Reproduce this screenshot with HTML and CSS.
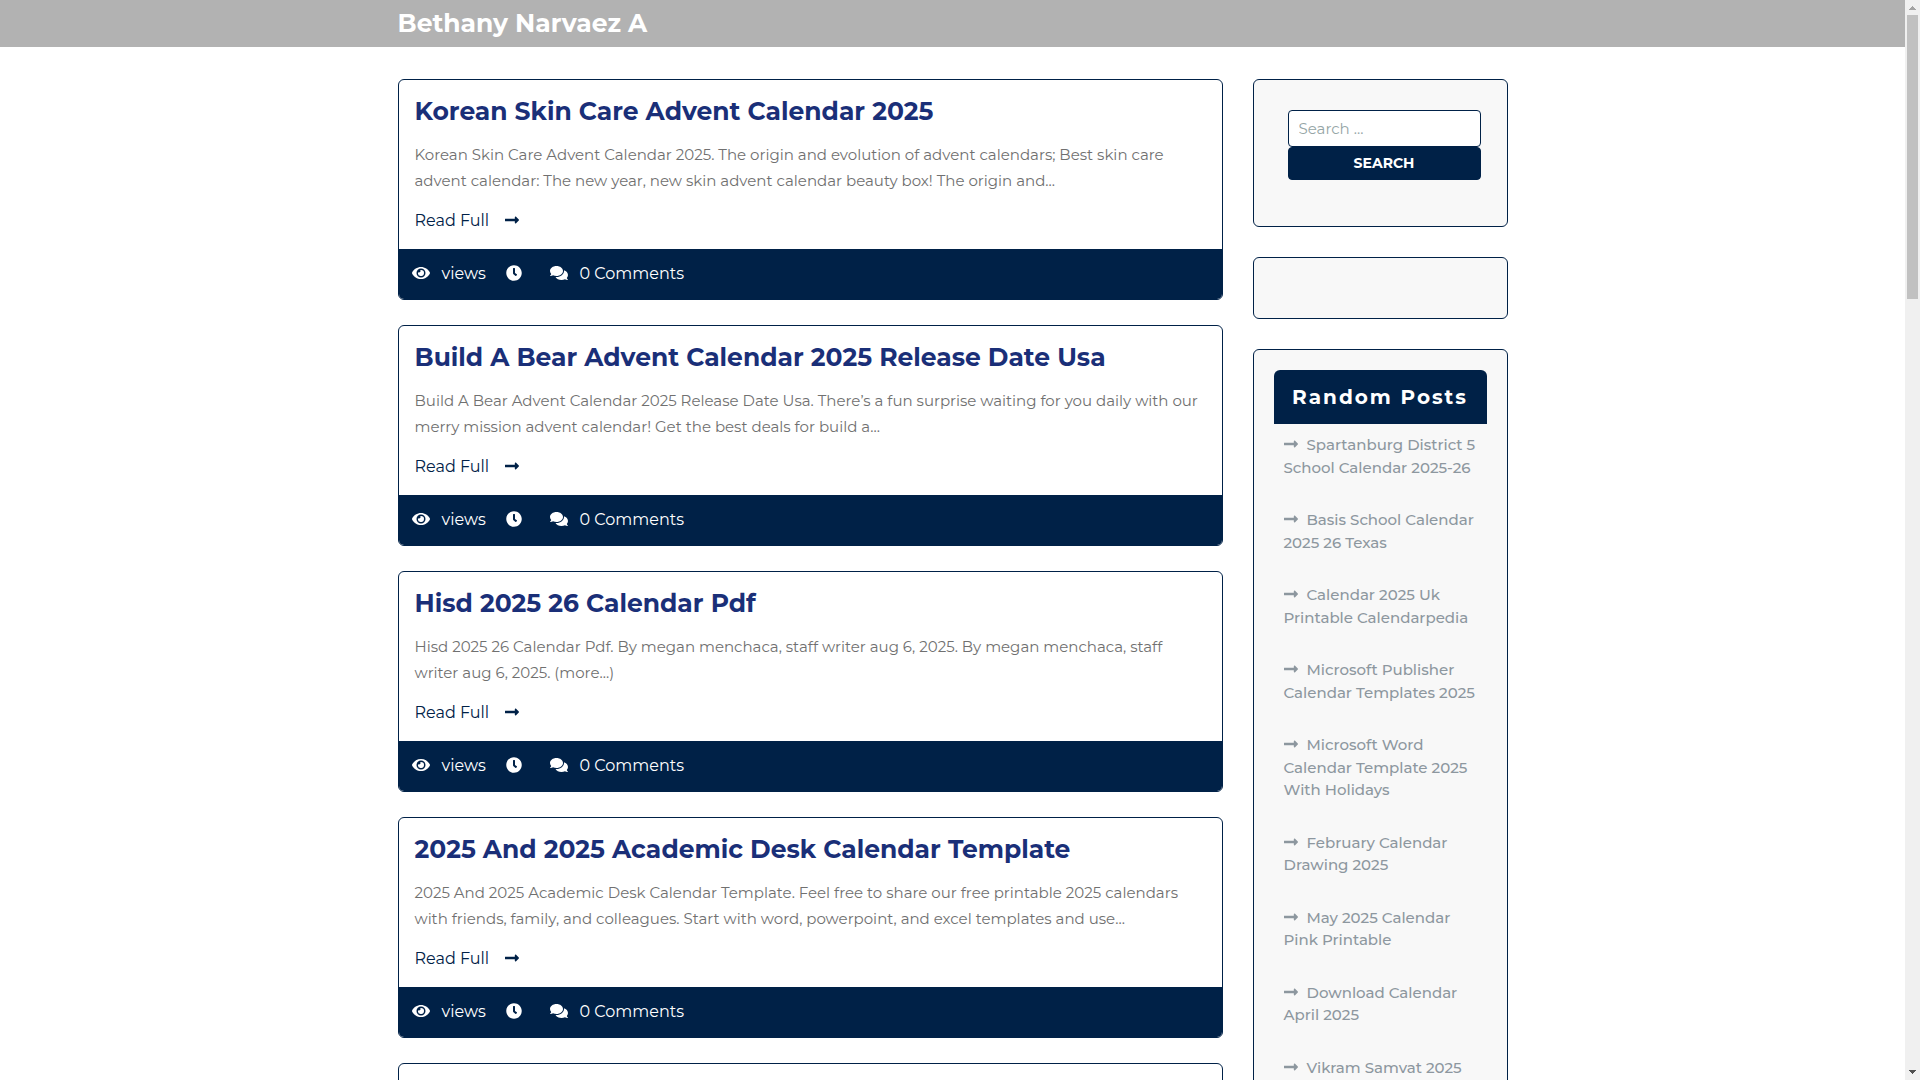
FILE: index.html
```html
<!doctype html>
<html lang="en">
<head>
<meta charset="utf-8">
<title>Bethany Narvaez A</title>
<link rel="stylesheet" href="styles.css">
</head>

<body>
<svg class="sprite" aria-hidden="true">
	<symbol id="arrow" viewBox="0 0 448 512"><path d="M313.941 216H12c-6.627 0-12 5.373-12 12v56c0 6.627 5.373 12 12 12h301.941v46.059c0 21.382 25.851 32.09 40.971 16.971l86.059-86.059c9.373-9.373 9.373-24.569 0-33.941l-86.059-86.059c-15.119-15.119-40.971-4.411-40.971 16.971V216z"/></symbol>
	<symbol id="eye" viewBox="0 0 576 512"><path d="M572.52 241.4C518.29 135.59 410.93 64 288 64S57.68 135.64 3.48 241.41a32.35 32.35 0 0 0 0 29.19C57.71 376.41 165.07 448 288 448s230.32-71.64 284.52-177.41a32.35 32.35 0 0 0 0-29.19zM288 400a144 144 0 1 1 144-144 143.93 143.93 0 0 1-144 144zm0-240a95.31 95.31 0 0 0-25.31 3.79 47.85 47.85 0 0 1-66.9 66.9A95.78 95.78 0 1 0 288 160z"/></symbol>
	<symbol id="clock" viewBox="0 0 512 512"><path d="M256,8C119,8,8,119,8,256S119,504,256,504,504,393,504,256,393,8,256,8Zm92.49,313h0l-20,25a16,16,0,0,1-22.49,2.5h0l-67-49.72a40,40,0,0,1-15-31.23V112a16,16,0,0,1,16-16h32a16,16,0,0,1,16,16V256l58,42.5A16,16,0,0,1,348.49,321Z"/></symbol>
	<symbol id="comments" viewBox="0 0 576 512"><path d="M416 192c0-88.4-93.1-160-208-160S0 103.6 0 192c0 34.3 14.1 65.9 38 92-13.4 30.2-35.5 54.2-35.8 54.5-2.2 2.3-2.8 5.7-1.5 8.7S4.8 352 8 352c36.6 0 66.9-12.3 88.7-25 32.2 15.7 70.3 25 111.3 25 114.9 0 208-71.6 208-160zm122 220c23.9-26 38-57.7 38-92 0-66.9-53.5-124.2-129.3-148.1.9 6.6 1.3 13.3 1.3 20.1 0 105.9-107.7 192-240 192-10.8 0-21.3-.8-31.7-1.9C207.8 439.6 281.8 480 368 480c41 0 79.1-9.2 111.3-25 21.8 12.7 52.1 25 88.7 25 3.2 0 6.1-1.9 7.3-4.8 1.3-2.9.7-6.3-1.5-8.7-.3-.3-22.4-24.2-35.8-54.5z"/></symbol>
</svg>

<div class="page">
	<header class="header">
		<div class="container">
			<a class="logo" href="#">Bethany Narvaez A</a>
		</div>
	</header>

	<div class="container content">
		<main class="posts">
			<article class="post">
				<div class="post-body">
					<h2><a href="#">Korean Skin Care Advent Calendar 2025</a></h2>
					<p>Korean Skin Care Advent Calendar 2025. The origin and evolution of advent calendars; Best skin care advent calendar: The new year, new skin advent calendar beauty box! The origin and…</p>
					<a class="read" href="#">Read Full <svg class="arrow"><use href="#arrow"/></svg></a>
				</div>
				<div class="meta">
					<span class="views"><svg class="wide"><use href="#eye"/></svg>views</span>
					<span class="time"><svg><use href="#clock"/></svg></span>
					<span><svg class="wide"><use href="#comments"/></svg>0 Comments</span>
				</div>
			</article>
			<article class="post">
				<div class="post-body">
					<h2><a href="#">Build A Bear Advent Calendar 2025 Release Date Usa</a></h2>
					<p>Build A Bear Advent Calendar 2025 Release Date Usa. There’s a fun surprise waiting for you daily with our merry mission advent calendar! Get the best deals for build a…</p>
					<a class="read" href="#">Read Full <svg class="arrow"><use href="#arrow"/></svg></a>
				</div>
				<div class="meta">
					<span class="views"><svg class="wide"><use href="#eye"/></svg>views</span>
					<span class="time"><svg><use href="#clock"/></svg></span>
					<span><svg class="wide"><use href="#comments"/></svg>0 Comments</span>
				</div>
			</article>
			<article class="post">
				<div class="post-body">
					<h2><a href="#">Hisd 2025 26 Calendar Pdf</a></h2>
					<p>Hisd 2025 26 Calendar Pdf. By megan menchaca, staff writer aug 6, 2025. By megan menchaca, staff writer aug 6, 2025. (more…)</p>
					<a class="read" href="#">Read Full <svg class="arrow"><use href="#arrow"/></svg></a>
				</div>
				<div class="meta">
					<span class="views"><svg class="wide"><use href="#eye"/></svg>views</span>
					<span class="time"><svg><use href="#clock"/></svg></span>
					<span><svg class="wide"><use href="#comments"/></svg>0 Comments</span>
				</div>
			</article>
			<article class="post">
				<div class="post-body">
					<h2><a href="#">2025 And 2025 Academic Desk Calendar Template</a></h2>
					<p>2025 And 2025 Academic Desk Calendar Template. Feel free to share our free printable 2025 calendars with friends, family, and colleagues. Start with word, powerpoint, and excel templates and use…</p>
					<a class="read" href="#">Read Full <svg class="arrow"><use href="#arrow"/></svg></a>
				</div>
				<div class="meta">
					<span class="views"><svg class="wide"><use href="#eye"/></svg>views</span>
					<span class="time"><svg><use href="#clock"/></svg></span>
					<span><svg class="wide"><use href="#comments"/></svg>0 Comments</span>
				</div>
			</article>
			<article class="post">
				<div class="post-body"></div>
			</article>
		</main>

		<aside class="sidebar">
			<section class="widget">
				<form class="search">
					<input type="search" placeholder="Search …" aria-label="Search">
					<button type="submit">SEARCH</button>
				</form>
			</section>
			<section class="widget"></section>
			<section class="widget">
				<h3>Random Posts</h3>
				<ul>
					<li><a href="#"><svg class="arrow"><use href="#arrow"/></svg>Spartanburg District 5 School Calendar 2025-26</a></li>
					<li><a href="#"><svg class="arrow"><use href="#arrow"/></svg>Basis School Calendar 2025 26 Texas</a></li>
					<li><a href="#"><svg class="arrow"><use href="#arrow"/></svg>Calendar 2025 Uk Printable Calendarpedia</a></li>
					<li><a href="#"><svg class="arrow"><use href="#arrow"/></svg>Microsoft Publisher Calendar Templates 2025</a></li>
					<li><a href="#"><svg class="arrow"><use href="#arrow"/></svg>Microsoft Word Calendar Template 2025 With Holidays</a></li>
					<li><a href="#"><svg class="arrow"><use href="#arrow"/></svg>February Calendar Drawing 2025</a></li>
					<li><a href="#"><svg class="arrow"><use href="#arrow"/></svg>May 2025 Calendar Pink Printable</a></li>
					<li><a href="#"><svg class="arrow"><use href="#arrow"/></svg>Download Calendar April 2025</a></li>
					<li><a href="#"><svg class="arrow"><use href="#arrow"/></svg>Vikram Samvat 2025</a></li>
				</ul>
			</section>
		</aside>
	</div>
</div>

<div class="scrollbar" aria-hidden="true">
	<svg class="up" viewBox="0 0 7 4"><path d="M3 0h1v1h1v1h1v1h1v1H0V3h1V2h1V1h1z"/></svg>
	<div class="thumb"></div>
	<svg class="down" viewBox="0 0 7 4"><path d="M0 0h7v1H6v1H5v1H4v1H3V3H2V2H1V1H0z"/></svg>
</div>
</body>
</html>
```

FILE: styles.css
```css
* {margin:0; padding:0; box-sizing:border-box; list-style:none;}

body {display:flex; height:100vh; overflow:hidden; background:#fff; color:#707070; font:16px/26px Montserrat, Inter, sans-serif;}
a {color:inherit; text-decoration:none;}
svg {width:16px; height:16px; fill:currentColor;}
.sprite {display:none;}
.arrow {width:14px;}
.wide {width:18px;}

.page {flex:1; min-width:0; overflow:hidden;}
.container {max-width:1140px; margin:0 auto; padding:0 15px;}

.header {background:#b2b2b2;}
.logo {display:block; padding:8px 0; color:#fff; font-size:25px; line-height:31px; font-weight:700;}

.content {display:grid; grid-template-columns:minmax(0, 1fr) 255px; gap:30px; padding-top:32px;}

/*posts*/
.post {margin-bottom:25px; border:1px solid #002147; border-radius:6px; overflow:hidden;}
.post-body {min-height:169px; padding:15px 16px;}
.post h2 {margin-bottom:15px; color:#1a2f78; font-size:25px; line-height:32px; font-weight:700;}
.post p {font-size:15px;}
.read {display:inline-flex; align-items:center; gap:16px; margin-top:14px; color:#002147;}
.read svg, .meta svg {margin-bottom:2px;}
.meta {display:flex; align-items:center; height:50px; padding:0 13px; background:#002147; color:#fff;}
.meta span {display:flex; align-items:center; gap:12px;}
.meta .views {width:94px;}
.meta .time {width:44px;}

/*sidebar*/
.widget {min-height:62px; margin-bottom:30px; padding:20px; border:1px solid #002147; border-radius:6px; background:#f8f8f8;}
.search {padding:10px 6px 26px 14px;}
.search input, .search button {display:block; width:100%; border:1px solid #002147; border-radius:4px; font-family:inherit;}
.search input {height:37px; padding:0 10px; background:#fff; font-size:15px; outline:none;}
.search input::placeholder {color:#95a5a6; opacity:1;}
.search button {height:33px; padding-bottom:2px; background:#002147; color:#fff; font-size:14px; font-weight:700;}
.widget h3 {border-radius:6px 6px 0 0; background:#002147; color:#fff; font-size:20px; line-height:54px; font-weight:700; letter-spacing:2px; text-align:center;}
.widget ul {padding:10px;}
.widget li {margin-bottom:30px; color:#8d979f; font-size:15px; line-height:1.5; font-weight:500;}
.widget li .arrow {margin-right:9px; vertical-align:-2px;}

/*window scrollbar*/
.scrollbar {display:flex; flex-direction:column; width:15px; padding:6px 2px; background:#f0f0f0; align-items:center;}
.scrollbar svg {width:7px; height:4px;}
.scrollbar .up {color:#a3a3a3;}
.scrollbar .down {color:#505050; margin-top:auto;}
.thumb {width:11px; height:26.6%; margin-top:5px; background:#c1c1c1;}
```
